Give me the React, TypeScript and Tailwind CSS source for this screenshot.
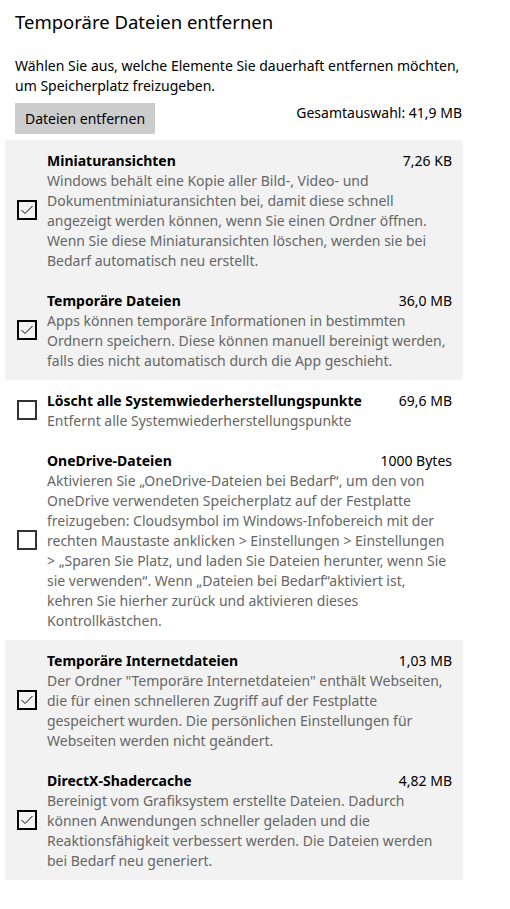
import React from "react";

type Item = {
  title: string;
  size: string;
  lines: string[];
  checked: boolean;
};

const group1: Item[] = [
  {
    title: "Miniaturansichten",
    size: "7,26 KB",
    checked: true,
    lines: [
      "Windows behält eine Kopie aller Bild-, Video- und",
      "Dokumentminiaturansichten bei, damit diese schnell",
      "angezeigt werden können, wenn Sie einen Ordner öffnen.",
      "Wenn Sie diese Miniaturansichten löschen, werden sie bei",
      "Bedarf automatisch neu erstellt.",
    ],
  },
  {
    title: "Temporäre Dateien",
    size: "36,0 MB",
    checked: true,
    lines: [
      "Apps können temporäre Informationen in bestimmten",
      "Ordnern speichern. Diese können manuell bereinigt werden,",
      "falls dies nicht automatisch durch die App geschieht.",
    ],
  },
];

const group2: Item[] = [
  {
    title: "Löscht alle Systemwiederherstellungspunkte",
    size: "69,6 MB",
    checked: false,
    lines: ["Entfernt alle Systemwiederherstellungspunkte"],
  },
  {
    title: "OneDrive-Dateien",
    size: "1000 Bytes",
    checked: false,
    lines: [
      "Aktivieren Sie „OneDrive-Dateien bei Bedarf“, um den von",
      "OneDrive verwendeten Speicherplatz auf der Festplatte",
      "freizugeben: Cloudsymbol im Windows-Infobereich mit der",
      "rechten Maustaste anklicken > Einstellungen > Einstellungen",
      "> „Sparen Sie Platz, und laden Sie Dateien herunter, wenn Sie",
      "sie verwenden“. Wenn „Dateien bei Bedarf“aktiviert ist,",
      "kehren Sie hierher zurück und aktivieren dieses",
      "Kontrollkästchen.",
    ],
  },
];

const group3: Item[] = [
  {
    title: "Temporäre Internetdateien",
    size: "1,03 MB",
    checked: true,
    lines: [
      "Der Ordner \"Temporäre Internetdateien\" enthält Webseiten,",
      "die für einen schnelleren Zugriff auf der Festplatte",
      "gespeichert wurden. Die persönlichen Einstellungen für",
      "Webseiten werden nicht geändert.",
    ],
  },
  {
    title: "DirectX-Shadercache",
    size: "4,82 MB",
    checked: true,
    lines: [
      "Bereinigt vom Grafiksystem erstellte Dateien. Dadurch",
      "können Anwendungen schneller geladen und die",
      "Reaktionsfähigkeit verbessert werden. Die Dateien werden",
      "bei Bedarf neu generiert.",
    ],
  },
];

function CheckBox({ checked }: { checked: boolean }) {
  return (
    <div
      className={
        checked
          ? "w-[20px] h-[20px] shrink-0 border-2 border-black flex items-center justify-center"
          : "w-[20px] h-[20px] shrink-0 border-2 border-[#333333]"
      }
    >
      {checked && (
        <svg width="16" height="16" viewBox="0 0 16 16" fill="none">
          <polyline
            points="2.5,8 6,11.5 13.5,4"
            stroke="#000"
            strokeWidth="1"
            fill="none"
          />
        </svg>
      )}
    </div>
  );
}

function Row({ item }: { item: Item }) {
  return (
    <div className="flex items-center py-[10px] pl-[12px]">
      <CheckBox checked={item.checked} />
      <div className="ml-[10px] w-[405px] shrink-0 pt-[1px] -mb-[1px]">
        <div className="grid grid-cols-[1fr_auto] items-center h-[20px]">
          <span className="font-bold text-black whitespace-nowrap">{item.title}</span>
          <span className="text-black whitespace-nowrap text-right">{item.size}</span>
        </div>
        <div className="text-[#666666]">
          {item.lines.map((l, i) => (
            <div key={i} className="whitespace-nowrap h-[20px]">
              {l}
            </div>
          ))}
        </div>
      </div>
    </div>
  );
}

export default function App() {
  return (
    <div
      className="w-[510px] h-[909px] bg-white text-black text-[14px] leading-[20px] overflow-hidden"
      style={{ fontFamily: '"Noto Sans", "Open Sans", sans-serif' }}
    >
      <div className="pl-[15px] pt-[8px] w-[462px]">
        <div className="text-[18.5px] leading-[28px]">Temporäre Dateien entfernen</div>
        <div className="mt-[20px]">
          <div className="whitespace-nowrap">
            Wählen Sie aus, welche Elemente Sie dauerhaft entfernen möchten,
          </div>
          <div className="whitespace-nowrap">um Speicherplatz freizugeben.</div>
        </div>
        <div className="mt-[7px] flex justify-between items-start">
          <button className="w-[140px] h-[31px] bg-[#cccccc] text-black flex items-center justify-center">
            Dateien entfernen
          </button>
          <span className="whitespace-nowrap">Gesamtauswahl: 41,9 MB</span>
        </div>
      </div>
      <div className="mt-[6px] ml-[5px] w-[458px]">
        <div className="bg-[#f2f2f2]">
          {group1.map((it, i) => (
            <Row key={i} item={it} />
          ))}
        </div>
        <div>
          {group2.map((it, i) => (
            <Row key={i} item={it} />
          ))}
        </div>
        <div className="bg-[#f2f2f2]">
          {group3.map((it, i) => (
            <Row key={i} item={it} />
          ))}
        </div>
      </div>
    </div>
  );
}
